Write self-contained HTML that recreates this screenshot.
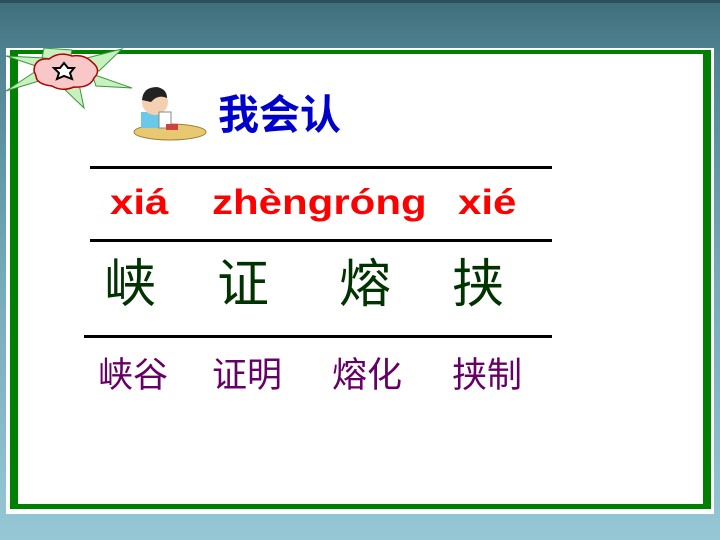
<!DOCTYPE html>
<html><head><meta charset="utf-8"><style>
body{margin:0;width:720px;height:540px;overflow:hidden;position:relative;background:linear-gradient(180deg,#3f6d7a 0%,#4f8391 10%,#74a9b8 50%,#96c7d5 100%);font-family:"Liberation Sans","Noto Sans CJK SC",sans-serif}
.p{position:absolute}
.t{position:absolute;white-space:nowrap;line-height:1}
.py{transform:scaleX(1.2);transform-origin:left top}
</style></head><body>
<div class="p" style="left:0;top:0;width:720px;height:3px;background:#2a4f58"></div>
<div class="p" style="left:6px;top:48px;width:708px;height:466px;background:#fff"></div>
<div class="p" style="left:10px;top:50px;width:685px;height:450px;border:4px solid #008000;border-left-width:8px;border-right-width:8px;border-bottom-width:5px"></div>
<svg class="p" style="left:4px;top:46px" width="130" height="65" viewBox="0 0 130 65">
<g fill="#c8f0c0" stroke="#3a9a3a" stroke-width="1">
<path d="M38 12 L40 2 L68 4 L66 14 Z"/><path d="M75 14 L118 3 L95 25 Z"/><path d="M88 28 L128 42 L92 40 Z"/><path d="M55 38 L80 62 L75 38 Z"/><path d="M35 35 L2 45 L32 25 Z"/><path d="M32 20 L2 10 L40 12Z"/></g>
<path d="M30 25 Q30 12 45 13 Q55 5 68 10 Q80 8 88 16 Q98 24 90 32 Q86 42 70 41 Q58 46 48 40 Q32 38 32 30 Z" fill="#f8c8c8" stroke="#b00000" stroke-width="1.5"/>
<path d="M60 17 L64 22 L70 22 L66 27 L68 33 L60 30 L53 33 L55 27 L50 22 L56 22 Z" fill="#fff" stroke="#000" stroke-width="2"/>
</svg>
<svg class="p" style="left:133px;top:84px" width="75" height="60" viewBox="0 0 75 60">
<ellipse cx="37" cy="48" rx="36" ry="8" fill="#e8c870" stroke="#a08030"/>
<rect x="8" y="28" width="20" height="16" fill="#6ac8e8"/>
<circle cx="22" cy="18" r="13" fill="#f5d0b0"/>
<path d="M9 16 Q10 3 24 3 Q34 5 34 14 Q25 10 18 18 Z" fill="#222"/>
<rect x="26" y="28" width="12" height="16" fill="#fff" stroke="#888"/>
<rect x="33" y="40" width="12" height="6" fill="#d04040"/>
</svg>
<div class="t" style="left:218px;top:95px;font-size:41px;color:#0000cc;font-weight:bold">我会认</div>
<div class="p" style="left:90px;top:166px;width:462px;height:3px;background:#000"></div>
<div class="p" style="left:90px;top:239px;width:462px;height:3px;background:#000"></div>
<div class="p" style="left:84px;top:335px;width:468px;height:3px;background:#000"></div>
<div class="t py" style="left:110px;top:185px;font-size:35px;font-weight:bold;color:#ff0000">xiá</div>
<div class="t py" style="left:212px;top:185px;font-size:35px;font-weight:bold;color:#ff0000">zhèngróng</div>
<div class="t py" style="left:458px;top:185px;font-size:35px;font-weight:bold;color:#ff0000">xié</div>
<div class="t" style="left:104px;top:259px;font-size:52px;color:#003300">峡</div>
<div class="t" style="left:217px;top:259px;font-size:52px;color:#003300">证</div>
<div class="t" style="left:339px;top:259px;font-size:52px;color:#003300">熔</div>
<div class="t" style="left:452px;top:259px;font-size:52px;color:#003300">挟</div>
<div class="t" style="left:98px;top:358px;font-size:35px;color:#660066">峡谷</div>
<div class="t" style="left:212px;top:358px;font-size:35px;color:#660066">证明</div>
<div class="t" style="left:332px;top:358px;font-size:35px;color:#660066">熔化</div>
<div class="t" style="left:452px;top:358px;font-size:35px;color:#660066">挟制</div>
</body></html>
